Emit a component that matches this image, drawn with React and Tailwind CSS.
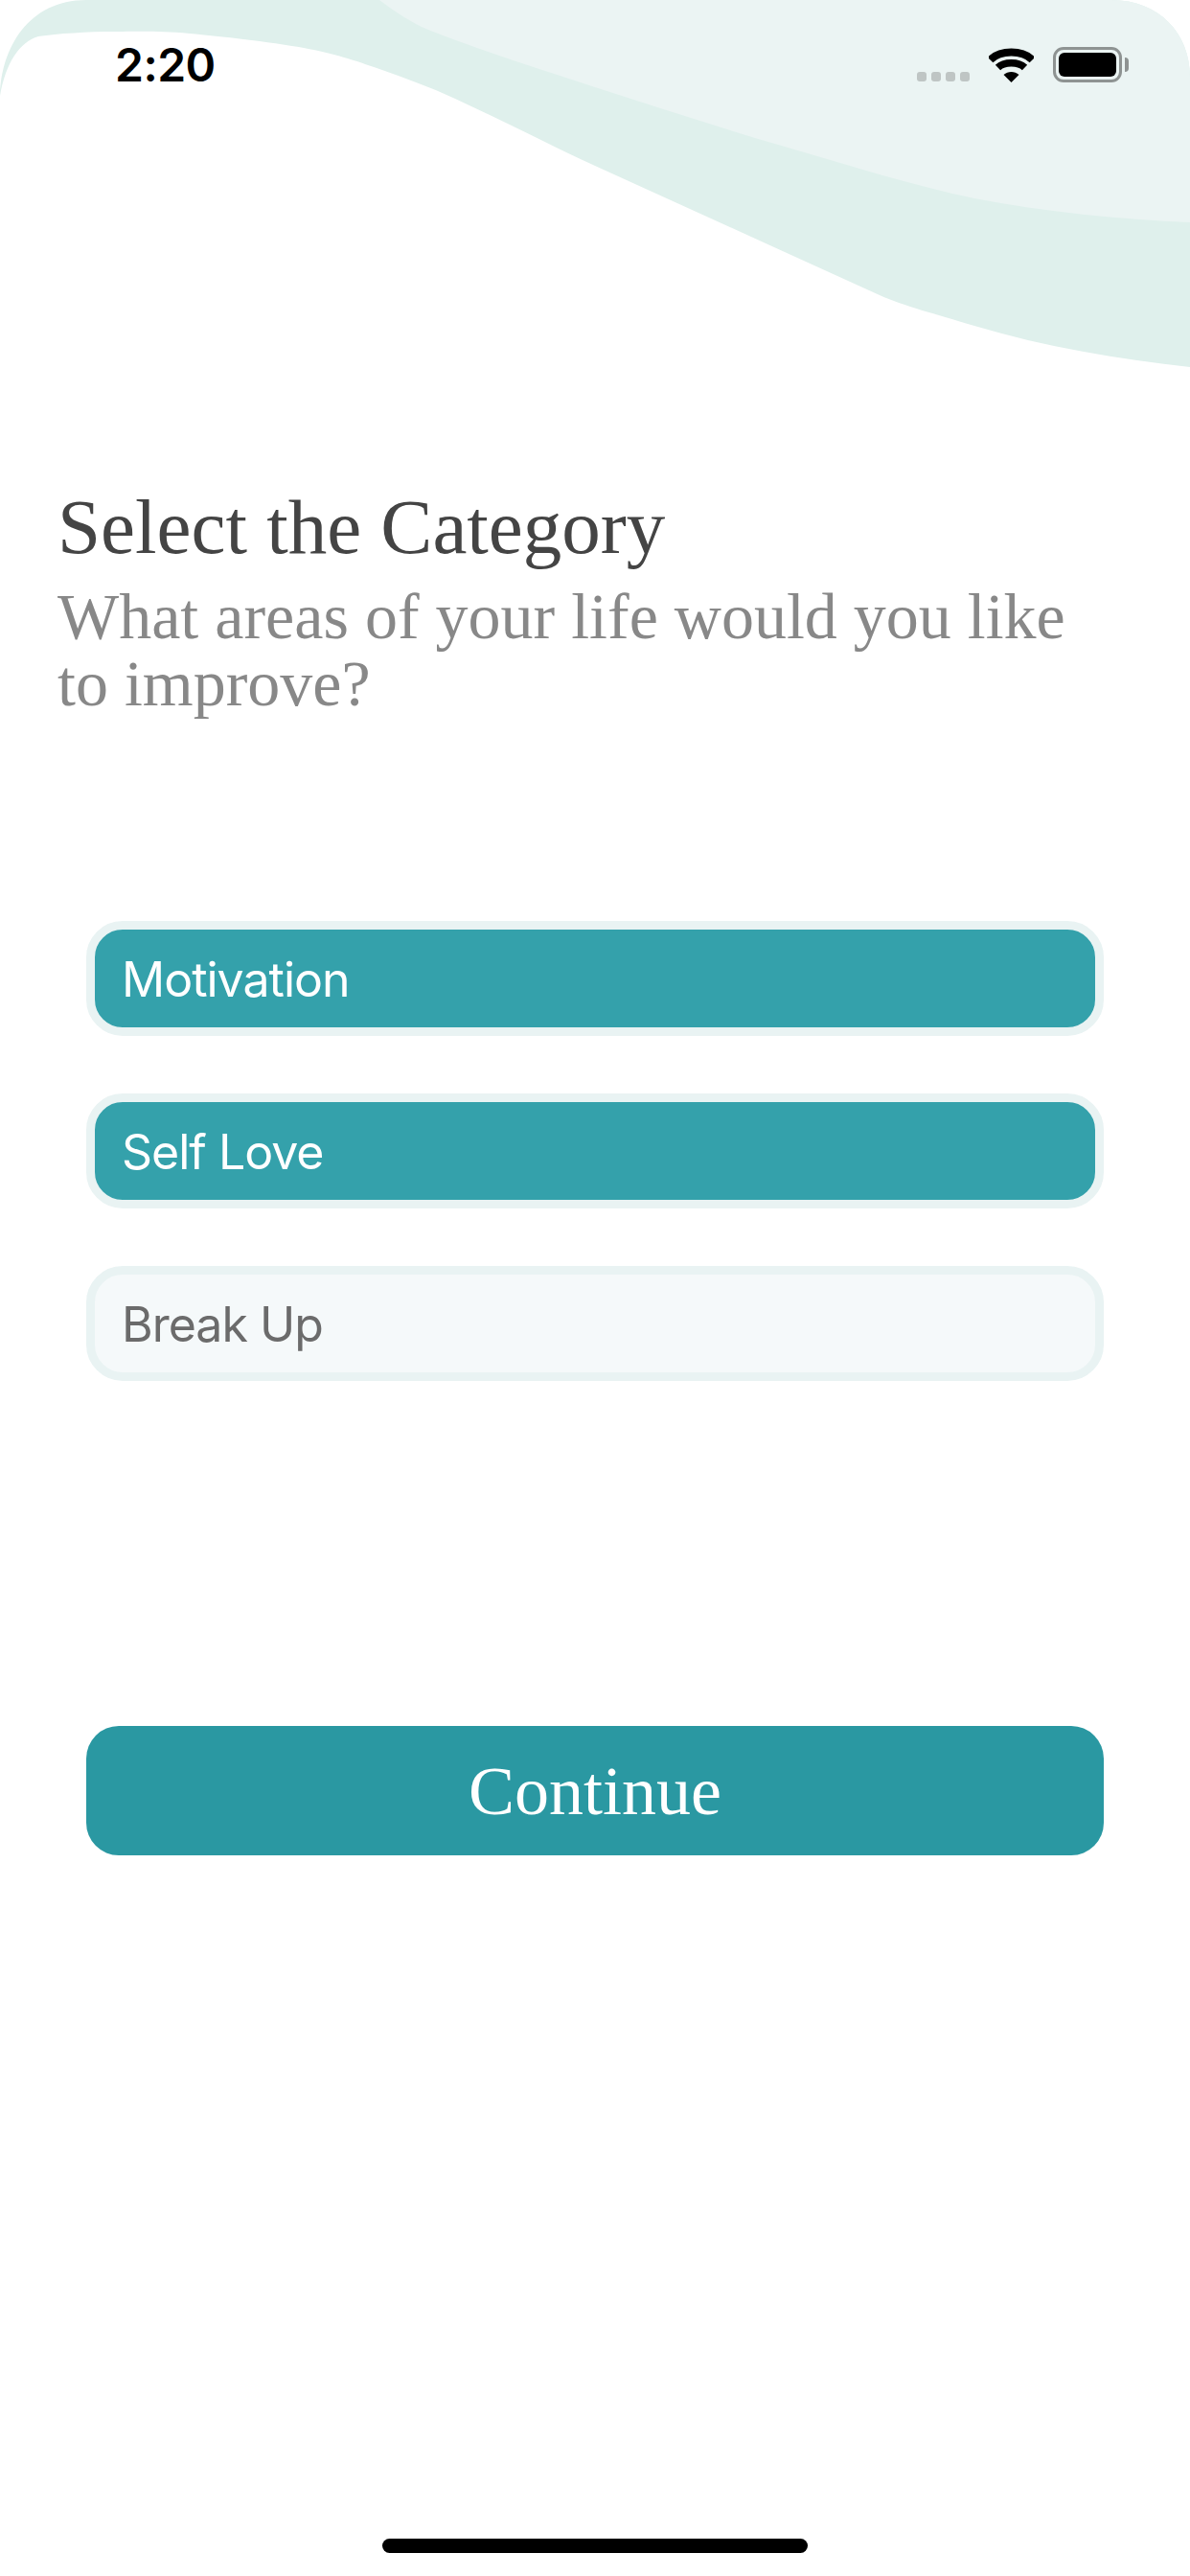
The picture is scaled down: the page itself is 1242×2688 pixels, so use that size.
const serif = "font-['Liberation_Serif',serif]";

function Wave() {
  return (
    <svg className="absolute left-0 top-0" width="1242" height="400" viewBox="0 0 1242 400" aria-hidden="true">
      <path
        fill="#dff0ec"
        d="M0 100 C1 50 30 0 90 0 L1160 0 C1210 0 1242 35 1242 80 L1242 383 C1170 375 1090 362 1017 340 C975 327 945 320 918 308 L621 173 C575 152 525 126 475 103 C449 91 422 81 396 72 C370 63 350 56 317 50 C284 44 231 38 198 35 C165 32 145 33 119 33 C92 33 60 35 40 38 C20 44 6 66 0 100 Z"
      />
      <path
        fill="#ebf4f3"
        d="M396 0 C412 12 430 24 447 31 C500 52 560 71 621 91 C687 112 753 134 819 153 C885 172 950 193 1017 207 C1090 221 1170 229 1242 232 L1242 80 C1242 35 1210 0 1160 0 Z"
      />
    </svg>
  );
}

function Wifi() {
  return (
    <svg width="47" height="36" viewBox="0 0 47 36" aria-hidden="true">
      <path d="M1.5 12.5 C12 1.8 35 1.8 45.5 12.5" fill="none" stroke="#000" strokeWidth="8" />
      <path d="M9.5 20.5 C16 14 31 14 37.5 20.5" fill="none" stroke="#000" strokeWidth="7.5" />
      <path d="M15.5 28 C20 24 27 24 31.5 28 L23.5 36 Z" fill="#000" />
    </svg>
  );
}

function Battery() {
  return (
    <div className="flex items-center">
      <div className="h-[37px] w-[72px] rounded-[11px] border-[3px] border-[#8e9392] p-[3px]">
        <div className="h-full w-full rounded-[6px] bg-black" />
      </div>
      <div className="ml-[3px] h-[15px] w-[4px] rounded-r-[4px] bg-[#8e9392]" />
    </div>
  );
}

function StatusBar() {
  return (
    <div className="relative flex h-[86px] items-end pl-[120px] pr-[64px]">
      <span className="mb-[-6px] font-['Inter',sans-serif] text-[48px] font-semibold leading-[48px] tracking-[-0.5px] text-black">2:20</span>
      <div className="ml-auto flex items-end">
        <div className="mb-[1px] flex gap-[5px]">
          <span className="h-[10px] w-[10px] rounded-[3px] bg-[#bfc5c4]" />
          <span className="h-[10px] w-[10px] rounded-[3px] bg-[#bfc5c4]" />
          <span className="h-[10px] w-[10px] rounded-[3px] bg-[#bfc5c4]" />
          <span className="h-[10px] w-[10px] rounded-[3px] bg-[#bfc5c4]" />
        </div>
        <div className="mx-[20px]"><Wifi /></div>
        <Battery />
      </div>
    </div>
  );
}

function Choice({ label, selected }) {
  return (
    <div
      className={
        "flex h-[120px] items-center rounded-[38px] border-[9px] border-[#e9f3f3] pl-[28px] pt-[2px] font-['Inter',sans-serif] text-[50px] tracking-[-1px] " +
        (selected ? "bg-[#34a1ab] text-white" : "bg-[#f5f9fa] text-[#6b6b6b]")
      }
    >
      {label}
    </div>
  );
}

export default function App() {
  return (
    <div className="relative flex h-[2688px] w-[1242px] flex-col overflow-hidden bg-white">
      <Wave />
      <StatusBar />
      <div className={"relative mt-[419px] pl-[60px] pr-[100px] " + serif}>
        <h1 className="text-[81px] leading-[90px] text-[#444444]">Select the Category</h1>
        <p className="mt-[13px] text-[68px] leading-[70px] text-[#888888]">What areas of your life would you like to improve?</p>
      </div>
      <div className="relative mt-[213px] flex flex-col gap-[60px] px-[90px]">
        <Choice label="Motivation" selected />
        <Choice label="Self Love" selected />
        <Choice label="Break Up" />
      </div>
      <div className="mt-[360px] px-[90px]">
        <button className={"flex h-[135px] w-full items-center justify-center rounded-[34px] bg-[#2a98a2] text-[72px] text-white " + serif}>
          Continue
        </button>
      </div>
      <div className="mb-[24px] mt-auto flex justify-center">
        <div className="h-[15px] w-[444px] rounded-full bg-black" />
      </div>
    </div>
  );
}
